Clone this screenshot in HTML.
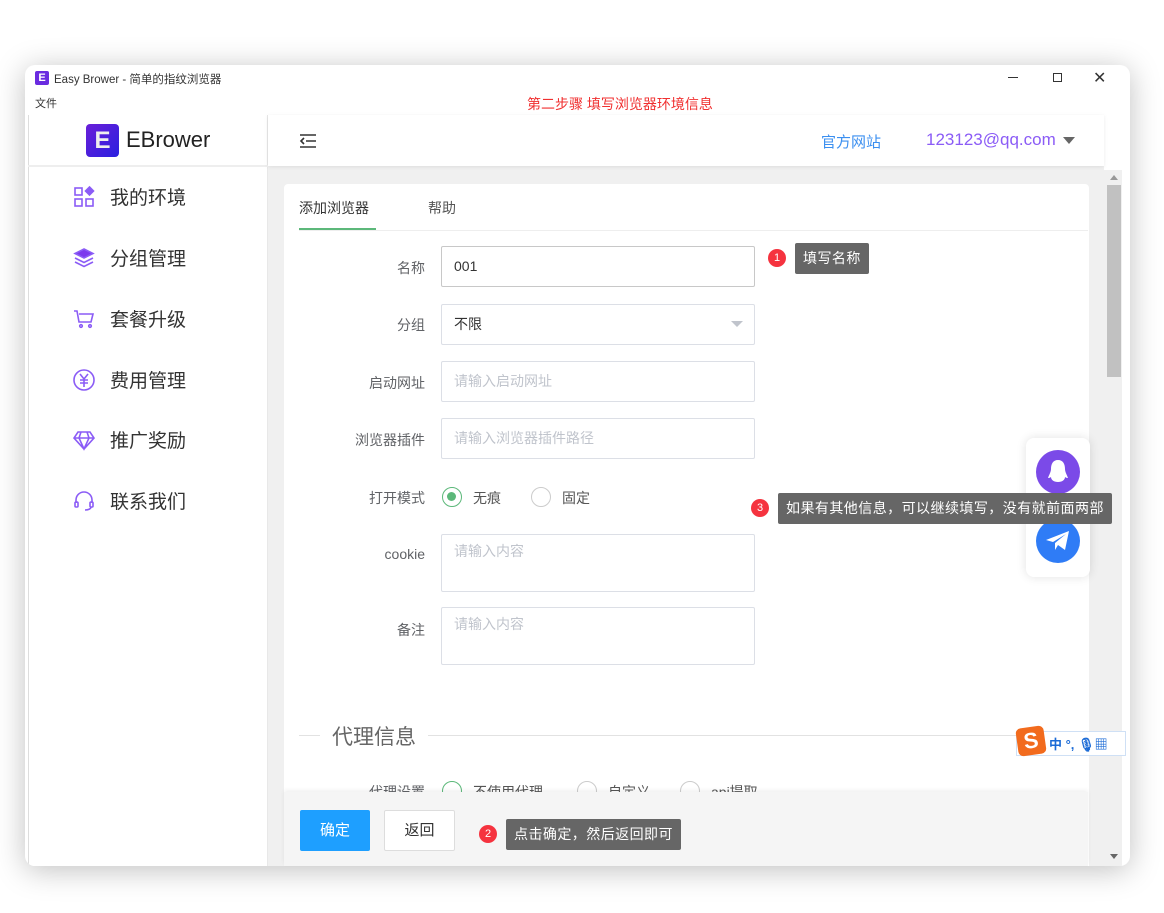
<!DOCTYPE html>
<html><head><meta charset="utf-8"><style>
*{box-sizing:border-box;margin:0;padding:0}
body{width:1164px;height:913px;background:#fff;font-family:"Liberation Sans","Noto Sans CJK SC",sans-serif;position:relative;overflow:hidden;color:#333}
.abs{position:absolute}
.win{left:25px;top:65px;width:1105px;height:801px;background:#fff;border-radius:10px;box-shadow:0 4px 30px rgba(0,0,0,.25);overflow:hidden}
.lbl{position:absolute;width:140px;text-align:right;font-size:14px;color:#606266;left:285px}
.inp{position:absolute;left:441px;width:314px;height:41px;border:1px solid #dcdfe6;border-radius:2px;font-size:14px;color:#c0c4cc;padding:0 12px;line-height:39px;background:#fff}
.nav{position:absolute;left:47px;font-size:19px;color:#333;display:flex;align-items:center}
.nav svg{width:24px;height:24px;margin-right:14px}
.tip{position:absolute;background:#666;color:#fff;font-size:14px;padding:0 8px;height:31px;line-height:31px;border-radius:2px;letter-spacing:.45px}
.badge{position:absolute;width:18px;height:18px;border-radius:50%;background:#f5333f;color:#fff;font-size:11px;text-align:center;line-height:18px}
.radio{position:absolute;width:20px;height:20px;border-radius:50%;border:1.5px solid #ccc;background:#fff}
</style></head><body>
<div class="abs win">
 <div class="abs" style="left:10px;top:6px;width:14px;height:14px;background:#6a2be0;border-radius:2px;color:#fff;font-size:11px;font-weight:bold;text-align:center;line-height:14px">E</div>
 <div class="abs" style="left:29px;top:6px;font-size:11.5px;color:#333">Easy Brower - 简单的指纹浏览器</div>
 <div class="abs" style="left:983px;top:12px;width:10px;height:1px;background:#333"></div>
 <div class="abs" style="left:1028px;top:8px;width:9px;height:9px;border:1px solid #333"></div>
 <div class="abs" style="left:1068px;top:3px;font-size:16px;color:#333">✕</div>
 <div class="abs" style="left:10px;top:30px;font-size:11px;color:#333">文件</div>
 <div class="abs" style="left:502px;top:29px;font-size:14px;color:#f03030">第二步骤 填写浏览器环境信息</div>
 <div class="abs" style="left:3px;top:50px;width:240px;height:760px;border-left:1px solid #ddd;border-right:1px solid #e8e8e8;background:#fff"></div>
 <div class="abs" style="left:3px;top:100px;width:240px;height:2px;background:#eee"></div>
 <div class="abs" style="left:61px;top:59px;width:33px;height:33px;border-radius:4px;background:linear-gradient(135deg,#6a1fd8,#2a1fe0);color:#eee;font-size:24px;font-weight:bold;text-align:center;line-height:33px">E</div>
 <div class="abs" style="left:101px;top:62px;font-size:22px;color:#222">EBrower</div>
 <div class="nav" style="top:118px"><svg viewBox="0 0 24 24" fill="none" stroke="#8b5cf6" stroke-width="1.6"><rect x="3" y="3" width="7" height="7"/><rect x="3" y="14" width="7" height="7"/><rect x="14" y="14" width="7" height="7"/><path d="M17.5 2l4 4-4 4-4-4z" fill="#8b5cf6"/></svg>我的环境</div>
 <div class="nav" style="top:179px"><svg viewBox="0 0 24 24" fill="none" stroke="#8b5cf6" stroke-width="1.6"><path d="M12 3l9 4.5-9 4.5-9-4.5z" fill="#7c3aed"/><path d="M3 12l9 4.5 9-4.5M3 16l9 4.5 9-4.5"/></svg>分组管理</div>
 <div class="nav" style="top:240px"><svg viewBox="0 0 24 24" fill="none" stroke="#8b5cf6" stroke-width="1.6"><path d="M2 4h3l2 11h12l2-8H7"/><circle cx="9" cy="19" r="1.3"/><circle cx="18" cy="19" r="1.3"/></svg>套餐升级</div>
 <div class="nav" style="top:301px"><svg viewBox="0 0 24 24" fill="none" stroke="#8b5cf6" stroke-width="1.6"><circle cx="12" cy="12" r="10"/><path d="M8 6l4 5 4-5M12 11v8M8 12h8M8 15h8"/></svg>费用管理</div>
 <div class="nav" style="top:361px"><svg viewBox="0 0 24 24" fill="none" stroke="#8b5cf6" stroke-width="1.6"><path d="M6 4h12l4 6-10 11L2 10z M2 10h20 M9 4l-2 6 5 11 5-11-2-6"/></svg>推广奖励</div>
 <div class="nav" style="top:422px"><svg viewBox="0 0 24 24" fill="none" stroke="#8b5cf6" stroke-width="1.6"><path d="M4 14v-3a8 8 0 0116 0v3"/><rect x="3" y="13" width="3" height="5" rx="1"/><rect x="18" y="13" width="3" height="5" rx="1"/><path d="M19 18c0 2-3 3-6 3"/></svg>联系我们</div>
 <div class="abs" style="left:243px;top:50px;width:836px;height:751px;background:#f0f0f0"></div>
 <div class="abs" style="left:243px;top:50px;width:836px;height:51px;background:#fff;box-shadow:0 1px 4px rgba(0,0,0,.08)"></div>
 <svg class="abs" style="left:274px;top:68px" width="18" height="16" viewBox="0 0 18 16" stroke="#333" stroke-width="1.6"><path d="M1 2h16M7 8h10M1 14h16M5 5l-3 3 3 3" fill="none"/></svg>
 <div class="abs" style="left:796px;top:66px;font-size:15px;color:#3b8ff0">官方网站</div>
 <div class="abs" style="left:901px;top:65px;font-size:17px;color:#8b5cf6">123123@qq.com</div>
 <div class="abs" style="left:1038px;top:72px;border-left:6px solid transparent;border-right:6px solid transparent;border-top:7px solid #666"></div>
 <div class="abs" style="left:1079px;top:105px;width:18px;height:696px;background:#f0f0f0"></div>
 <div class="abs" style="left:1082px;top:120px;width:14px;height:192px;background:#c1c1c1"></div>
 <div class="abs" style="left:1085px;top:110px;border-left:4px solid transparent;border-right:4px solid transparent;border-bottom:5px solid #999"></div>
 <div class="abs" style="left:1085px;top:789px;border-left:4px solid transparent;border-right:4px solid transparent;border-top:5px solid #666"></div>
 <div class="abs" style="left:259px;top:119px;width:805px;height:690px;background:#fff;border-radius:4px"></div>
</div>
<div class="abs" style="left:299px;top:198px;font-size:14px;color:#333">添加浏览器</div>
<div class="abs" style="left:428px;top:198px;font-size:14px;color:#555">帮助</div>
<div class="abs" style="left:299px;top:228px;width:77px;height:2px;background:#5cb87a"></div>
<div class="abs" style="left:299px;top:230px;width:789px;height:1px;background:#eee"></div>

<div class="lbl" style="top:258px">名称</div>
<div class="inp" style="top:246px;color:#333;border-color:#c8c8c8">001</div>
<div class="lbl" style="top:315px">分组</div>
<div class="inp" style="top:304px;color:#333">不限</div>
<div class="abs" style="left:731px;top:321px;border-left:6px solid transparent;border-right:6px solid transparent;border-top:6px solid #c0c4cc"></div>
<div class="lbl" style="top:373px">启动网址</div>
<div class="inp" style="top:361px">请输入启动网址</div>
<div class="lbl" style="top:430px">浏览器插件</div>
<div class="inp" style="top:418px">请输入浏览器插件路径</div>
<div class="lbl" style="top:488px">打开模式</div>
<div class="radio" style="left:442px;top:487px;border-color:#5cb87a"><div style="width:9px;height:9px;border-radius:50%;background:#5cb87a;margin:4px"></div></div>
<div class="abs" style="left:473px;top:488px;font-size:14px;color:#555">无痕</div>
<div class="radio" style="left:531px;top:487px"></div>
<div class="abs" style="left:562px;top:488px;font-size:14px;color:#555">固定</div>
<div class="lbl" style="top:546px">cookie</div>
<div class="inp" style="top:534px;height:58px;line-height:32px">请输入内容</div>
<div class="lbl" style="top:620px">备注</div>
<div class="inp" style="top:607px;height:58px;line-height:32px">请输入内容</div>

<div class="abs" style="left:299px;top:735px;width:789px;height:1px;background:#e2e2e2"></div>
<div class="abs" style="left:320px;top:721px;background:#fff;padding:0 12px;font-size:21px;color:#666">代理信息</div>
<div class="lbl" style="top:782px">代理设置</div>
<div class="radio" style="left:442px;top:781px;border-color:#5cb87a"></div>
<div class="abs" style="left:473px;top:782px;font-size:14px;color:#555">不使用代理</div>
<div class="radio" style="left:577px;top:781px"></div>
<div class="abs" style="left:608px;top:782px;font-size:14px;color:#555">自定义</div>
<div class="radio" style="left:680px;top:781px"></div>
<div class="abs" style="left:711px;top:782px;font-size:14px;color:#555">api提取</div>
<div class="abs" style="left:284px;top:792px;width:804px;height:74px;background:#f5f5f5;box-shadow:0 -2px 4px rgba(0,0,0,.06)"></div>
<div class="abs" style="left:300px;top:810px;width:70px;height:41px;background:#1e9fff;border-radius:2px;color:#fff;font-size:15px;text-align:center;line-height:41px">确定</div>
<div class="abs" style="left:384px;top:810px;width:71px;height:41px;background:#fff;border:1px solid #ddd;border-radius:2px;color:#333;font-size:15px;text-align:center;line-height:39px">返回</div>

<div class="badge" style="left:768px;top:249px">1</div>
<div class="tip" style="left:795px;top:243px">填写名称</div>
<div class="badge" style="left:479px;top:825px">2</div>
<div class="tip" style="left:506px;top:819px">点击确定，然后返回即可</div>
<div class="abs" style="left:1026px;top:438px;width:64px;height:139px;background:#fff;border-radius:8px;box-shadow:0 0 10px rgba(0,0,0,.12)"></div>
<div class="abs" style="left:1036px;top:450px;width:44px;height:44px;border-radius:50%;background:#7b4ae8"></div>
<svg class="abs" style="left:1046px;top:458px" width="24" height="28" viewBox="0 0 24 28"><path d="M12 2c-5 0-7 4-7 9 0 3-2 6-3 9 2 0 3-1 3-1 0 3 3 5 7 5s7-2 7-5c0 0 1 1 3 1-1-3-3-6-3-9 0-5-2-9-7-9z" fill="#fff"/></svg>
<div class="abs" style="left:1036px;top:519px;width:44px;height:44px;border-radius:50%;background:#2f7cf6"></div>
<svg class="abs" style="left:1045px;top:530px" width="26" height="22" viewBox="0 0 26 22"><path d="M1 10L24 1l-4 19-7-5-3 5v-7l11-9-13 8z" fill="#fff"/></svg>
<div class="badge" style="left:751px;top:499px">3</div>
<div class="tip" style="left:778px;top:493px">如果有其他信息，可以继续填写，没有就前面两部</div>
<div class="abs" style="left:1016px;top:731px;width:110px;height:25px;background:#fff;border:1px solid #cfe0f5"></div>
<div class="abs" style="left:1017px;top:727px;width:28px;height:28px;background:#f26b1d;border-radius:5px;transform:rotate(-8deg);color:#fff;font-weight:bold;font-size:22px;text-align:center;line-height:28px">S</div>
<div class="abs" style="left:1049px;top:734px;font-size:13px;color:#1a6ad6;font-weight:bold">中 °, <span>🎙</span>▦</div>
</body></html>
